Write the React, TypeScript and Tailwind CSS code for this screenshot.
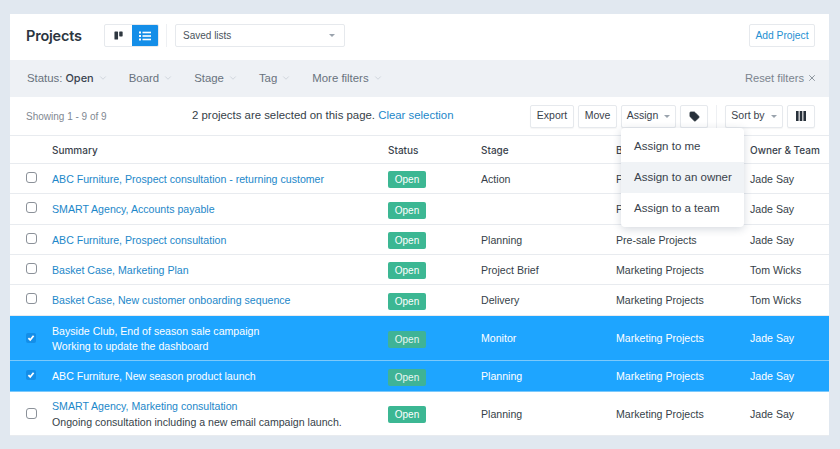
import { ChevronDown, Tag, X } from "lucide-react";

type Row = {
  title: string;
  note?: string;
  stage: string;
  board: string;
  owner: string;
  selected?: boolean;
  height: string;
};

const rows: Row[] = [
  { title: "ABC Furniture, Prospect consultation - returning customer", stage: "Action", board: "Pre-sale Projects", owner: "Jade Say", height: "h-[30px]" },
  { title: "SMART Agency, Accounts payable", stage: "", board: "Pre-sale Projects", owner: "Jade Say", height: "h-[31px]" },
  { title: "ABC Furniture, Prospect consultation", stage: "Planning", board: "Pre-sale Projects", owner: "Jade Say", height: "h-[30px]" },
  { title: "Basket Case, Marketing Plan", stage: "Project Brief", board: "Marketing Projects", owner: "Tom Wicks", height: "h-[30px]" },
  { title: "Basket Case, New customer onboarding sequence", stage: "Delivery", board: "Marketing Projects", owner: "Tom Wicks", height: "h-[31px]" },
  { title: "Bayside Club, End of season sale campaign", note: "Working to update the dashboard", stage: "Monitor", board: "Marketing Projects", owner: "Jade Say", selected: true, height: "h-[45px]" },
  { title: "ABC Furniture, New season product launch", stage: "Planning", board: "Marketing Projects", owner: "Jade Say", selected: true, height: "h-[31px]" },
  { title: "SMART Agency, Marketing consultation", note: "Ongoing consultation including a new email campaign launch.", stage: "Planning", board: "Marketing Projects", owner: "Jade Say", height: "h-[44px]" },
];

const columns = "grid grid-cols-[42px_336px_93px_135px_134px_1fr] items-center";

function Filter({ label, value }: { label: string; value?: string }) {
  return (
    <span className="flex items-center gap-[4px] text-[11.4px] text-[#68727d]">
      <span>
        {label}
        {value && <span className="font-['Inter',sans-serif] text-[11px] font-medium text-[#3a4450]"> {value}</span>}
      </span>
      <ChevronDown className="h-[10px] w-[10px] text-[#b3bcc6]" strokeWidth={1.25} />
    </span>
  );
}

function Caret() {
  return <span className="h-0 w-0 border-x-[3.5px] border-t-[3.5px] border-x-transparent border-t-[#9aa3ad]" />;
}

function ToolButton({ children, className = "" }: { children: React.ReactNode; className?: string }) {
  return (
    <button className={`flex h-[23px] items-center justify-center gap-[6px] rounded-[2px] border border-[#e6e9ed] bg-white text-[10.5px] text-[#39424c] shadow-[0_1px_1px_rgba(0,0,0,0.04)] ${className}`}>
      {children}
    </button>
  );
}

function Checkbox({ checked, tall }: { checked?: boolean; tall: boolean }) {
  const offset = tall ? "mb-[2px]" : "mb-[5px]";
  if (checked) {
    return (
      <span className={`flex h-[10px] w-[10px] items-center justify-center rounded-[2px] bg-[#148ee8] ${offset}`}>
        <svg viewBox="0 0 10 10" className="h-[10px] w-[10px]" fill="none" stroke="white" strokeWidth="1.8">
          <path d="M2.4 5.2 4.2 7l3.4-4.2" />
        </svg>
      </span>
    );
  }
  return <span className={`block h-[11px] w-[11px] rounded-[3px] border border-[#8b9199] bg-white ${offset}`} />;
}

function ProjectRow({ row }: { row: Row }) {
  const base = row.selected ? "bg-[#1ea5ff] text-white border-[#7cc9fb]" : "bg-white text-[#363f49] border-[#e8ebef]";
  return (
    <div className={`${columns} ${row.height} border-b pt-[2px] text-[10.6px] ${base}`}>
      <span className="flex pl-4">
        <Checkbox checked={row.selected} tall={!!row.note} />
      </span>
      <div className="leading-[15.5px]">
        <div className={row.selected ? "text-white" : "text-[#1c87c9]"}>{row.title}</div>
        {row.note && <div>{row.note}</div>}
      </div>
      <span className="flex">
        <span className={`flex h-[17px] w-[38px] items-center justify-center rounded-[2px] text-[10px] ${row.selected ? "bg-[#3fb396] text-[#e8f7f3]" : "bg-[#3cb793] text-white"}`}>
          Open
        </span>
      </span>
      <span>{row.stage}</span>
      <span>{row.board}</span>
      <span>{row.owner}</span>
    </div>
  );
}

export default function App() {
  return (
    <div className="h-[449px] w-[840px] overflow-hidden bg-[#e1e8f0] px-[10px] pt-[14px] font-['Liberation_Sans',sans-serif]">
      <div className="relative h-[422px] w-[819px] bg-white">
        <header className="flex h-[46px] items-center pb-[3px] pl-[16px] pr-[14px]">
          <h1 className="w-[78px] font-['Inter',sans-serif] text-[14.5px] font-semibold tracking-[-0.2px] text-[#2c3540]">Projects</h1>
          <div className="flex h-[23px] w-[55px] overflow-hidden rounded-[2px] border border-[#e6e9ed]">
            <span className="flex flex-1 items-center justify-center">
              <svg viewBox="0 0 10 10" className="h-[9px] w-[9px]" fill="#2e3740">
                <rect x="0.5" y="0.5" width="4" height="9" rx="0.7" />
                <rect x="5.8" y="0.5" width="3.8" height="5.6" rx="0.7" />
              </svg>
            </span>
            <span className="flex flex-1 items-center justify-center bg-[#148ee8]">
              <svg viewBox="0 0 12 10" className="h-[10px] w-[12px]" fill="white">
                <rect x="0" y="0.5" width="2" height="2" />
                <rect x="0" y="4" width="2" height="2" />
                <rect x="0" y="7.5" width="2" height="2" />
                <rect x="3.5" y="0.7" width="8.5" height="1.6" />
                <rect x="3.5" y="4.2" width="8.5" height="1.6" />
                <rect x="3.5" y="7.7" width="8.5" height="1.6" />
              </svg>
            </span>
          </div>
          <span className="ml-[7px] mr-[8px] h-[23px] w-px bg-[#eef0f3]" />
          <div className="flex h-[23px] w-[170px] items-center justify-between rounded-[2px] border border-[#e6e9ed] pl-[7px] pr-[9px] text-[10px] text-[#4a535d]">
            Saved lists
            <Caret />
          </div>
          <button className="ml-auto h-[23px] w-[66px] rounded-[2px] border border-[#e6e9ed] text-[10.3px] text-[#2590d2]">
            Add Project
          </button>
        </header>

        <div className="flex h-[37px] items-center bg-[#eef1f5] pl-[17px] pr-[12px]">
          <div className="flex items-center gap-[21px]">
            <Filter label="Status:" value="Open" />
            <Filter label="Board" />
            <Filter label="Stage" />
            <Filter label="Tag" />
            <Filter label="More filters" />
          </div>
          <span className="ml-auto flex items-center gap-[3px] text-[11.2px] text-[#7b848e]">
            Reset filters
            <X className="h-[10px] w-[10px]" strokeWidth={2} />
          </span>
        </div>

        <div className="flex h-[39px] items-center border-b border-[#e8ebef] pl-[16px] pr-[14px]">
          <span className="w-[166px] text-[10px] text-[#7f8892]">Showing 1 - 9 of 9</span>
          <span className="text-[11.4px] text-[#353e48]">
            2 projects are selected on this page. <span className="text-[#1c87c9]">Clear selection</span>
          </span>
          <div className="ml-auto flex items-center gap-[4px]">
            <ToolButton className="w-[44px]">Export</ToolButton>
            <ToolButton className="w-[39px]">Move</ToolButton>
            <ToolButton className="w-[55px]">
              Assign
              <Caret />
            </ToolButton>
            <ToolButton className="w-[28px]">
              <Tag className="h-[11px] w-[11px] fill-[#28313b] text-[#28313b]" strokeWidth={1.5} />
            </ToolButton>
            <span className="mx-[4px] h-[23px] w-px bg-[#eef0f3]" />
            <ToolButton className="w-[58px]">
              Sort by
              <Caret />
            </ToolButton>
            <ToolButton className="w-[28px]">
              <svg viewBox="0 0 10 10" className="h-[10px] w-[10px]" fill="#28313b">
                <rect x="0" y="0" width="2.6" height="10" />
                <rect x="3.7" y="0" width="2.6" height="10" />
                <rect x="7.4" y="0" width="2.6" height="10" />
              </svg>
            </ToolButton>
          </div>
        </div>

        <div className={`${columns} h-[28px] border-b border-[#e8ebef] pt-[2px] font-['Inter',sans-serif] text-[10px] font-medium text-[#3a434d]`}>
          <span />
          <span>Summary</span>
          <span>Status</span>
          <span>Stage</span>
          <span>Board</span>
          <span>Owner &amp; Team</span>
        </div>

        {rows.map((row) => (
          <ProjectRow key={row.title} row={row} />
        ))}

        <div className="absolute left-[611px] top-[114px] w-[123px] rounded-[4px] bg-white py-[3px] text-[11.5px] text-[#39424c] shadow-[0_2px_8px_rgba(40,60,90,0.2)]">
          <div className="flex h-[31px] items-center pl-[13px]">Assign to me</div>
          <div className="flex h-[31px] items-center bg-[#f0f3f6] pl-[13px]">Assign to an owner</div>
          <div className="flex h-[31px] items-center pl-[13px]">Assign to a team</div>
        </div>
      </div>
    </div>
  );
}
